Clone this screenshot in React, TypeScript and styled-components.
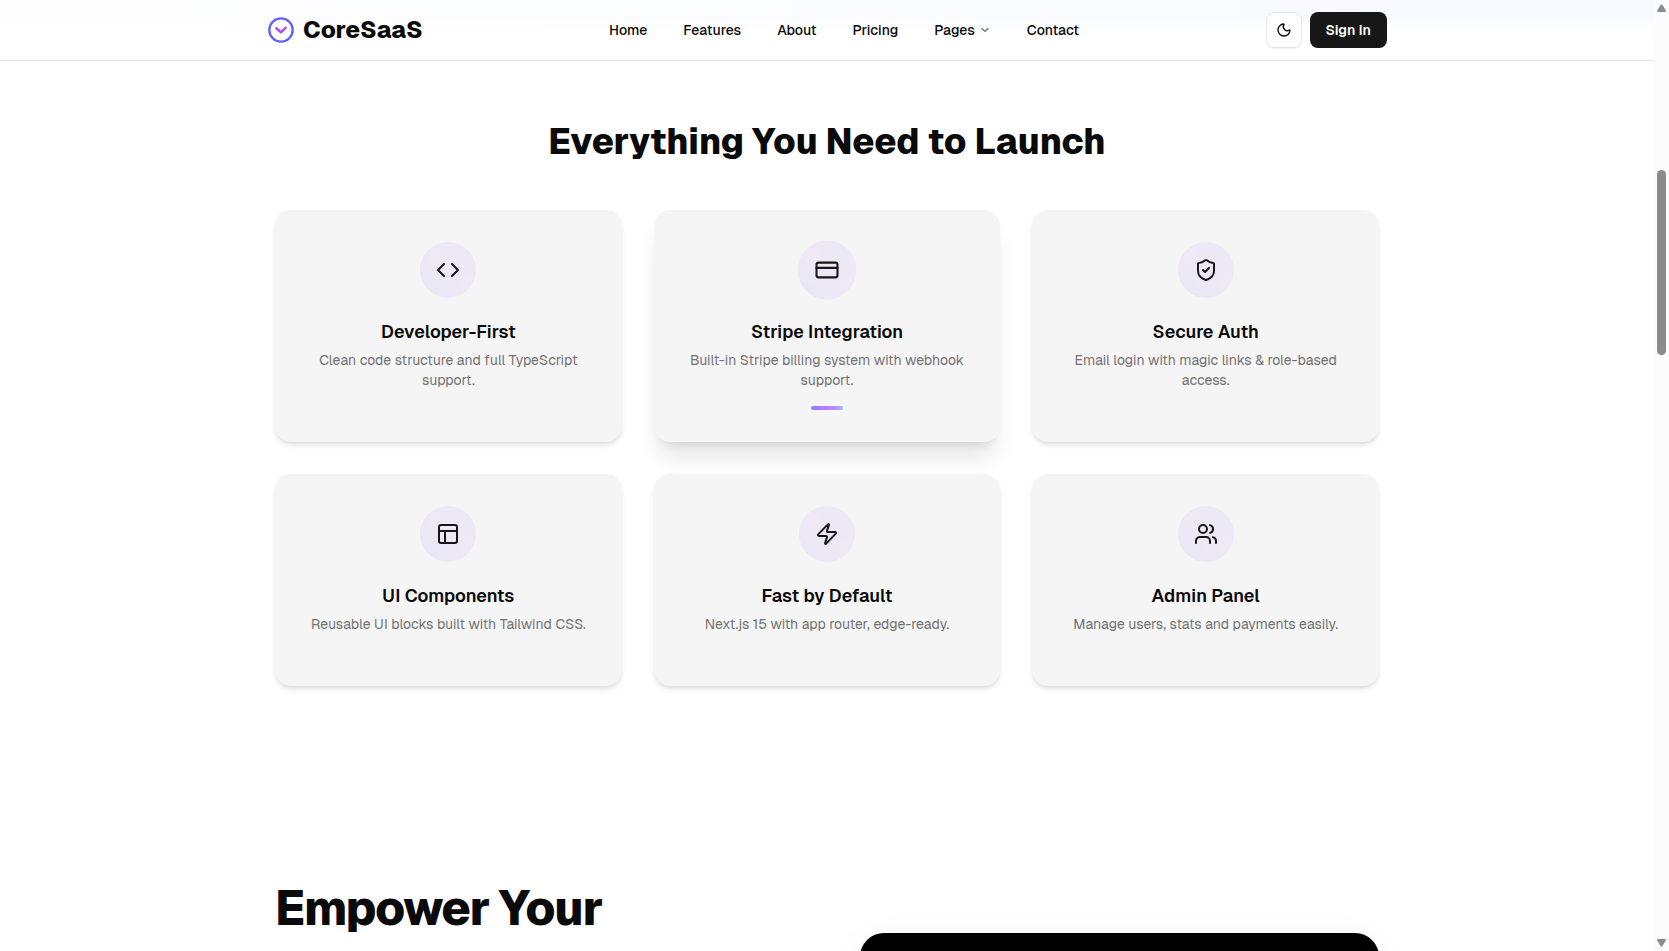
import React from 'react';
import styled, { createGlobalStyle, css } from 'styled-components';
import {
  ChevronDown,
  Code,
  CreditCard,
  LucideIcon,
  Moon,
  PanelsTopLeft,
  ShieldCheck,
  Users,
  Zap,
} from 'lucide-react';

const GlobalStyle = createGlobalStyle`
  *, *::before, *::after { box-sizing: border-box; }
  body {
    margin: 0;
    background: #ffffff;
    color: #0a0a0a;
    font-family: Geist, Inter, "Liberation Sans", sans-serif;
    font-size: 14px;
    line-height: 20px;
  }
  h1, h2, h3, p { margin: 0; }
`;

const Shell = styled.div`
  display: flex;
  height: 100vh;
  overflow: hidden;
`;

const Page = styled.div`
  flex: 1;
  min-width: 0;
`;

const Header = styled.header`
  border-bottom: 1px solid #e5e5e5;
  background: linear-gradient(to bottom, transparent 16px, #ffffff 36px),
    linear-gradient(to right, #fefefe, #fbfcff 50%, #f8faff 85%);
`;

const HeaderInner = styled.div`
  display: flex;
  align-items: center;
  justify-content: space-between;
  max-width: 1152px;
  margin: 0 auto;
  padding: 12px 16px;
`;

const Brand = styled.a`
  display: flex;
  align-items: center;
  gap: 8px;
  color: inherit;
  font-size: 24px;
  line-height: 32px;
  font-weight: 800;
  text-decoration: none;
`;

const Nav = styled.nav`
  display: flex;
  align-items: center;
  gap: 36px;
`;

const navItem = css`
  display: flex;
  align-items: center;
  gap: 4px;
  padding: 0;
  border: 0;
  background: none;
  color: inherit;
  font: inherit;
  font-weight: 500;
  text-decoration: none;
  cursor: pointer;
`;

const NavLink = styled.a`
  ${navItem}
`;

const NavMenuButton = styled.button`
  ${navItem}
`;

const Actions = styled.div`
  display: flex;
  gap: 8px;
`;

const ThemeButton = styled.button`
  display: grid;
  place-items: center;
  width: 36px;
  height: 36px;
  padding: 0;
  border: 1px solid #e5e5e5;
  border-radius: 8px;
  background: #ffffff;
  color: inherit;
  box-shadow: 0 1px 2px rgba(0, 0, 0, 0.05);
`;

const SignInButton = styled.button`
  height: 36px;
  padding: 0 16px;
  border: 0;
  border-radius: 8px;
  background: #171717;
  color: #fafafa;
  font: inherit;
  font-weight: 600;
`;

const Features = styled.section`
  max-width: 1152px;
  margin: 0 auto;
  padding: 61px 24px 96px;
`;

const SectionTitle = styled.h2`
  margin-bottom: 48px;
  font-size: 36px;
  line-height: 40px;
  font-weight: 800;
  text-align: center;
`;

const CardGrid = styled.div`
  display: grid;
  grid-template-columns: repeat(3, minmax(0, 1fr));
  gap: 32px;
`;

const Card = styled.article<{ $active: boolean }>`
  display: flex;
  flex-direction: column;
  align-items: center;
  padding: 32px;
  border-radius: 16px;
  background: #f5f5f5;
  text-align: center;
  box-shadow: ${({ $active }) =>
    $active
      ? '0 20px 25px -5px rgba(0, 0, 0, 0.1), 0 8px 10px -6px rgba(0, 0, 0, 0.1)'
      : '0 4px 6px -1px rgba(0, 0, 0, 0.1), 0 2px 4px -2px rgba(0, 0, 0, 0.1)'};
`;

const IconDisc = styled.div<{ $active: boolean }>`
  display: grid;
  place-items: center;
  width: 56px;
  height: 56px;
  margin-bottom: 20px;
  border-radius: 50%;
  background: radial-gradient(circle at 25% 25%, #f0e8f5, transparent 50%),
    radial-gradient(circle at 85% 75%, #f0e8f5, transparent 50%),
    linear-gradient(45deg, #e8e7f6, #ece9f7);
  color: #171717;
  transform: ${({ $active }) => ($active ? 'scale(1.05)' : 'none')};
`;

const CardTitle = styled.h3`
  margin-bottom: 4px;
  font-size: 18px;
  line-height: 28px;
  font-weight: 600;
`;

const CardText = styled.p`
  color: #737373;
`;

const Accent = styled.span<{ $active: boolean }>`
  width: 32px;
  height: 4px;
  margin-top: 16px;
  border-radius: 2px;
  background: linear-gradient(to right, #7c86ff, #c27aff, #a3b3ff);
  opacity: ${({ $active }) => ($active ? 1 : 0)};
`;

const Showcase = styled.section`
  display: flex;
  justify-content: space-between;
  align-items: flex-start;
  max-width: 1152px;
  margin: 0 auto;
  padding: 96px 24px;
`;

const ShowcaseTitle = styled.h2`
  font-size: 48px;
  line-height: 60px;
  font-weight: 800;
  letter-spacing: -0.025em;
`;

const Preview = styled.div`
  width: 47%;
  height: 300px;
  margin-top: 55px;
  border-radius: 24px;
  background: #000000;
  box-shadow: 0 8px 40px rgba(0, 0, 0, 0.05);
`;

const ScrollTrack = styled.div`
  display: flex;
  flex-direction: column;
  align-items: center;
  justify-content: space-between;
  width: 15px;
  padding: 4px 0;
  background: #fcfcfc;
`;

const ScrollLane = styled.div`
  flex: 1;
  padding-top: 158px;
`;

const ScrollThumb = styled.div`
  width: 9px;
  height: 185px;
  border-radius: 5px;
  background: #8b8b8b;
`;

interface Feature {
  icon: LucideIcon;
  title: string;
  text: string;
  active?: boolean;
}

const features: Feature[] = [
  { icon: Code, title: 'Developer-First', text: 'Clean code structure and full TypeScript support.' },
  { icon: CreditCard, title: 'Stripe Integration', text: 'Built-in Stripe billing system with webhook support.', active: true },
  { icon: ShieldCheck, title: 'Secure Auth', text: 'Email login with magic links & role-based access.' },
  { icon: PanelsTopLeft, title: 'UI Components', text: 'Reusable UI blocks built with Tailwind CSS.' },
  { icon: Zap, title: 'Fast by Default', text: 'Next.js 15 with app router, edge-ready.' },
  { icon: Users, title: 'Admin Panel', text: 'Manage users, stats and payments easily.' },
];

const LogoMark = () => (
  <svg width="28" height="28" viewBox="0 0 24 24" fill="none" aria-hidden="true">
    <circle cx="12" cy="12" r="10" stroke="#615fff" strokeWidth="2" />
    <path d="M8 10.5l4 3.5 4-4" stroke="#ad46ff" strokeWidth="2" strokeLinecap="round" strokeLinejoin="round" />
  </svg>
);

const ScrollArrow = ({ down = false }: { down?: boolean }) => (
  <svg width="9" height="8" viewBox="0 0 9 8" aria-hidden="true">
    <path
      d={down ? 'M1 0H8Q9 0 9 1L5.5 7Q4.5 8 3.5 7L0 1Q0 0 1 0Z' : 'M1 8H8Q9 8 9 7L5.5 1Q4.5 0 3.5 1L0 7Q0 8 1 8Z'}
      fill="#8b8b8b"
    />
  </svg>
);

export default function App() {
  return (
    <>
      <GlobalStyle />
      <Shell>
        <Page>
          <Header>
            <HeaderInner>
              <Brand href="#">
                <LogoMark />
                CoreSaaS
              </Brand>
              <Nav aria-label="Main">
                <NavLink href="#home">Home</NavLink>
                <NavLink href="#features">Features</NavLink>
                <NavLink href="#about">About</NavLink>
                <NavLink href="#pricing">Pricing</NavLink>
                <NavMenuButton type="button" aria-haspopup="menu">
                  Pages
                  <ChevronDown size={12} />
                </NavMenuButton>
                <NavLink href="#contact">Contact</NavLink>
              </Nav>
              <Actions>
                <ThemeButton type="button" aria-label="Toggle theme">
                  <Moon size={16} />
                </ThemeButton>
                <SignInButton type="button">Sign in</SignInButton>
              </Actions>
            </HeaderInner>
          </Header>
          <main>
            <Features id="features">
              <SectionTitle>Everything You Need to Launch</SectionTitle>
              <CardGrid>
                {features.map(({ icon: Icon, title, text, active = false }) => (
                  <Card key={title} $active={active}>
                    <IconDisc $active={active}>
                      <Icon size={24} />
                    </IconDisc>
                    <CardTitle>{title}</CardTitle>
                    <CardText>{text}</CardText>
                    <Accent $active={active} />
                  </Card>
                ))}
              </CardGrid>
            </Features>
            <Showcase>
              <ShowcaseTitle>Empower Your</ShowcaseTitle>
              <Preview />
            </Showcase>
          </main>
        </Page>
        <ScrollTrack aria-hidden="true">
          <ScrollArrow />
          <ScrollLane>
            <ScrollThumb />
          </ScrollLane>
          <ScrollArrow down />
        </ScrollTrack>
      </Shell>
    </>
  );
}
